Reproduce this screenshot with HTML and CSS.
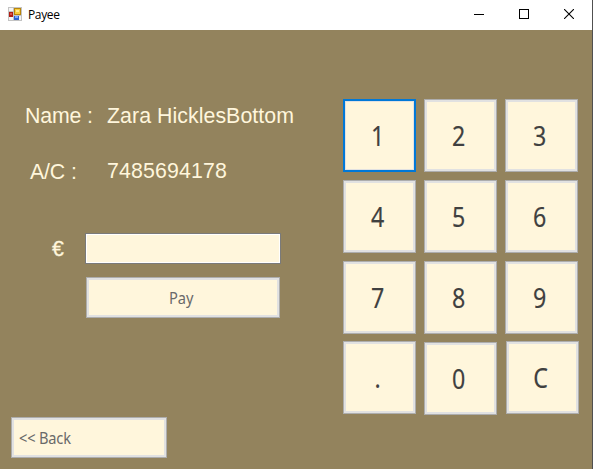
FILE: index.html
```html
<!DOCTYPE html>
<html lang="en">
<head>
<meta charset="utf-8">
<title>Payee</title>
<link rel="stylesheet" href="styles.css">
</head>
<body>
<div class="window">
  <header class="titlebar">
    <svg class="app-icon" width="14" height="14" viewBox="0 0 14 14" shape-rendering="crispEdges">
      <path d="M0 0h14v14H0z" fill="#c3c3c3"/>
      <path d="M1 1h4v3H1zM1 10h4v3H1zM6 9h7v4H6z" fill="#f4f4f4"/>
      <path d="M6 1h7v7H6z" fill="#b8860b"/>
      <path d="M7 2h5v5H7z" fill="#f8cc3c"/>
      <path d="M8 3h3v2H8z" fill="#ffe990"/>
      <path d="M1 5h4v5H1z" fill="#b01e14"/>
      <path d="M2 6h2v2H2z" fill="#d9554a"/>
      <path d="M6 9h5v4H6z" fill="#2c62cf"/>
      <path d="M7 9h3v2H7z" fill="#77a8ff"/>
    </svg>
    <span class="title">Payee</span>
    <div class="controls">
      <svg width="10" height="10" viewBox="0 0 10 10" shape-rendering="crispEdges"><path d="M0 5h10v1H0z"/></svg>
      <svg width="10" height="10" viewBox="0 0 10 10" shape-rendering="crispEdges"><path d="M0 0h10v10H0zM1 1v8h8V1z" fill-rule="evenodd"/></svg>
      <svg width="10" height="10" viewBox="0 0 10 10"><path d="M0 0l10 10M10 0L0 10" stroke="#000" stroke-width="1.1"/></svg>
    </div>
  </header>
  <main class="content">
    <section class="form">
      <div class="row name"><span class="label">Name :</span><span class="value">Zara HicklesBottom</span></div>
      <div class="row account"><span class="label">A/C :</span><span class="value number">7485694178</span></div>
      <div class="row amount"><label class="label" for="amount">€</label><input id="amount" type="text"></div>
      <button class="btn pay"><span>Pay</span></button>
      <button class="btn back"><span>&lt;&lt; Back</span></button>
    </section>
    <section class="keypad">
      <button class="btn key active"><span>1</span></button>
      <button class="btn key"><span>2</span></button>
      <button class="btn key"><span>3</span></button>
      <button class="btn key"><span>4</span></button>
      <button class="btn key"><span>5</span></button>
      <button class="btn key"><span>6</span></button>
      <button class="btn key"><span>7</span></button>
      <button class="btn key"><span>8</span></button>
      <button class="btn key"><span>9</span></button>
      <button class="btn key dot"><span>.</span></button>
      <button class="btn key zero"><span>0</span></button>
      <button class="btn key clear"><span>C</span></button>
    </section>
  </main>
</div>
</body>
</html>
```
FILE: styles.css
```css
* { box-sizing: border-box; }
body { margin: 0; overflow: hidden; }
.window {
  width: 593px;
  height: 469px;
  border-right: 1px solid #505050;
  background: #93835d;
  display: flex;
  flex-direction: column;
}
.titlebar {
  height: 30px;
  flex: none;
  display: flex;
  align-items: center;
  padding: 0 18px 0 8px;
  background: #fff;
}
.app-icon { margin-top: -2px; }
.title {
  margin-left: 6px;
  font: 12px/16px "Open Sans", "Noto Sans", sans-serif;
  letter-spacing: -0.35px;
  color: #000;
}
.controls { margin: -2px 0 0 auto; display: flex; gap: 35px; }
.content { flex: 1; display: flex; }
.form {
  width: 343px;
  display: flex;
  flex-direction: column;
  align-items: flex-start;
  font: 21.33px/24px "Liberation Sans", Arial, sans-serif;
  color: #fff6dc;
}
.row { display: flex; white-space: nowrap; }
.name { margin-top: 74px; padding-left: 25px; }
.name .label { width: 82px; letter-spacing: -0.15px; }
.value { letter-spacing: 0.05px; }
.account { margin-top: 32px; padding-left: 30px; }
.account .label { width: 77px; letter-spacing: -0.15px; }
.account .number { margin-top: -1px; letter-spacing: 0.13px; }
.amount { margin-top: 49px; padding-left: 52px; align-items: center; }
.amount .label { width: 33px; -webkit-text-stroke: 0.3px #fff6dc; }
#amount {
  width: 196px;
  height: 31px;
  padding: 0 4px;
  border: 1px solid #7a7a7a;
  outline: none;
  background: #fff6dc;
  box-shadow: inset 0 0 0 1px #fff;
  font: inherit;
}
.btn {
  padding: 0;
  border: 1px solid #adadad;
  border-radius: 0;
  background: #fff6dc;
  box-shadow: inset 0 0 0 2px #e1e1e1;
  color: #696969;
  font: 17px/20px "Noto Sans", sans-serif;
}
.btn span { display: inline-block; transform: scaleX(.86); }
.pay { width: 194px; height: 41px; margin: 13px 0 0 86px; padding-right: 3px; }
.back { width: 156px; height: 41px; margin: 99px 0 0 11px; padding-left: 7px; text-align: left; }
.back span { transform-origin: left; letter-spacing: -0.2px; }
.keypad {
  margin-top: 69px;
  display: grid;
  grid-template-columns: repeat(3, 73px);
  grid-auto-rows: 73px;
  gap: 8px;
  align-content: start;
}
.key {
  padding-right: 3px;
  color: #404040;
  font-size: 27px;
  line-height: 34px;
  -webkit-text-stroke: 0.15px #404040;
}
.active { border: 2px solid #0078d7; box-shadow: inset 0 0 0 1px #e1e1e1; }
.dot { margin: -1px 0 1px; }
.clear { margin: -1px -1px 1px 1px; }
```
